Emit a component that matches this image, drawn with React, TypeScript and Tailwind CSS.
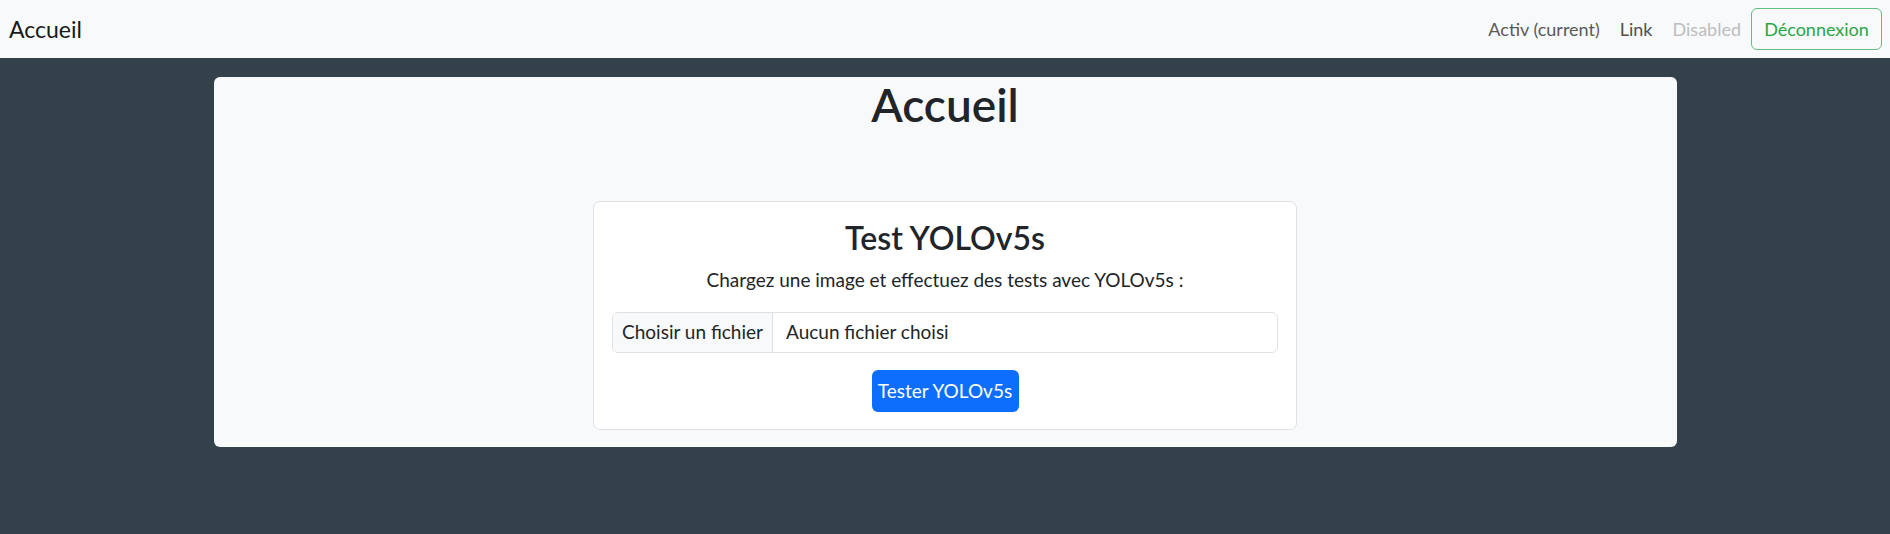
export default function App() {
  return (
    <div className="min-h-screen bg-[#33424a] font-['Lato',sans-serif] text-[#212529]">
      <nav className="h-[58px] bg-[#f8f9fa] flex items-center justify-between pl-[9px] pr-[8px]">
        <a className="text-[23px] leading-none text-[#1a1a1a]">Accueil</a>
        <div className="flex items-center">
          <ul className="flex items-center text-[18px]">
            <li className="px-[10px] text-[#595959]">Activ (current)</li>
            <li className="px-[10px] text-[#4f4f4f]">Link</li>
            <li className="px-[10px] text-[#bdbdbd]">Disabled</li>
          </ul>
          <button className="h-[42px] w-[131px] border border-[#65bd80] rounded-[6px] text-[18px] text-[#28a745] bg-transparent">
            Déconnexion
          </button>
        </div>
      </nav>

      <main className="pt-[19px]">
        <div className="w-[1463px] mx-auto rounded-[6px] bg-[#f8f9fa] flex flex-col items-center pb-[17px]">
          <h1 className="text-[46px] leading-[1.2] font-semibold">Accueil</h1>

          <div className="w-[704px] mt-[69px] border border-[#dee2e6] rounded-[7px] bg-white px-[18px] pt-[17px] pb-[17px] flex flex-col items-center">
            <h3 className="text-[32px] leading-[1.2] font-semibold">Test YOLOv5s</h3>
            <p className="mt-[8px] text-[19px] leading-[1.5]">
              Chargez une image et effectuez des tests avec YOLOv5s :
            </p>

            <div className="w-full h-[41px] mt-[18px] border border-[#dee2e6] rounded-[6px] flex items-stretch overflow-hidden text-[19px]">
              <span className="w-[160px] shrink-0 bg-[#f8f9fa] border-r border-[#dee2e6] flex items-center justify-center">
                Choisir un fichier
              </span>
              <span className="pl-[13px] flex items-center">Aucun fichier choisi</span>
            </div>

            <button className="mt-[17px] h-[42px] w-[147px] bg-[#0d6efd] rounded-[6px] text-white text-[19px]">
              Tester YOLOv5s
            </button>
          </div>
        </div>
      </main>
    </div>
  );
}
